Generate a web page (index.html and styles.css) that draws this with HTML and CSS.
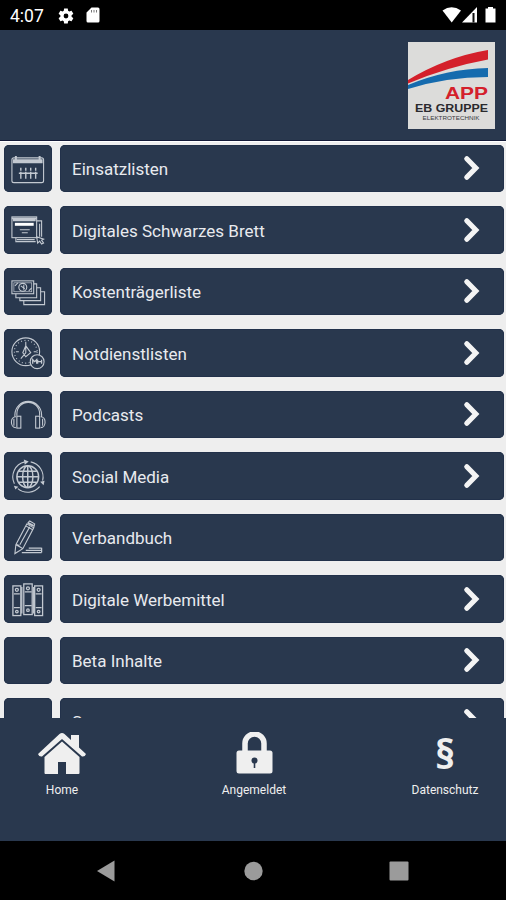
FILE: index.html
```
<!DOCTYPE html>
<html lang="de">
<head>
<meta charset="utf-8">
<title>EB Gruppe App</title>
<link rel="stylesheet" href="styles.css">
</head>
<body>
<svg class="defs" width="0" height="0"><defs>
<symbol id="chev" viewBox="0 0 18 26"><path d="M3.800 3.800L12.800 13L3.800 22.200" fill="none" stroke="#f4f4f4" stroke-width="5.200" stroke-linecap="round"/></symbol>
</defs></svg>
<div class="phone">
  <header class="status">
    <span class="time">4:07</span>
    <svg class="gear" width="18" height="18" viewBox="0 0 24 24"><path fill="#fff" fill-rule="evenodd" d="M19.400 13l.1-1-.1-1 2.100-1.700c.2-.1.200-.4.100-.6l-2-3.500c-.1-.2-.4-.3-.6-.2l-2.500 1-1.700-1-.4-2.600c0-.3-.2-.4-.5-.4h-4c-.2 0-.4.200-.5.400L9 5l-1.600 1-2.500-1c-.2-.1-.5 0-.6.200l-2 3.500c-.1.200-.1.500.1.600L4.500 11v2l-2.100 1.700c-.2.1-.2.400-.1.600l2 3.500c.1.200.4.300.6.200l2.500-1L9 19l.4 2.600c.1.200.3.400.5.400h4c.3 0 .5-.2.500-.4l.4-2.600 1.700-1 2.500 1c.2.100.5 0 .6-.2l2-3.500c.1-.2.100-.5-.1-.6zM12 15.200a3.200 3.200 0 1 1 0-6.400 3.200 3.200 0 0 1 0 6.400z"/></svg>
    <svg class="sd" width="14" height="16" viewBox="0 0 14 16"><path fill="#fff" d="M5.500.5H12a1.500 1.500 0 0 1 1.500 1.500v12a1.500 1.500 0 0 1-1.500 1.500H2A1.500 1.500 0 0 1 .5 14V5.500z"/><path d="M5.500 3v2.500M8 3v2.500M10.500 3v2.500" stroke="#777" stroke-width="1"/></svg>
    <svg class="signals" width="58" height="18" viewBox="0 0 58 18"><g fill="#fff"><path d="M.5 4.500Q9.500-2 19 4.500L9.700 16.500z"/><path d="M35 1v15.500H20z"/><path d="M46 2.500V1h5v1.500h2.500v14h-10v-14z"/></g><path d="M31.500 7v9.500" stroke="#111" stroke-width="2"/></svg>
  </header>
  <div class="brand">
    <svg class="logo" width="87" height="87" viewBox="0 0 87 87"><path fill="#dcdcda" d="M0 0h87v87H0z"/><path fill="#d4202b" d="M0 38Q38 15 80 8V17.500Q39 25 0 41.500z"/><path fill="#156bae" d="M0 43Q38 27 80 26V35Q38 35 0 47z"/><text class="logo-app" x="37" y="56.800" textLength="43" lengthAdjust="spacingAndGlyphs">APP</text><text class="logo-name" x="7" y="70.200" textLength="73" lengthAdjust="spacingAndGlyphs">EB GRUPPE</text><text class="logo-sub" x="14.500" y="77.500" textLength="57" lengthAdjust="spacingAndGlyphs">ELEKTROTECHNIK</text></svg>
  </div>
  <main class="list">
    <div class="row"><span class="tile"><svg viewBox="0 0 48 48"><rect x="8" y="13" width="32" height="25" rx="2"/><path d="M9 15.500h30M9 17.500h30" stroke-width="2"/><path d="M12 11v5M36 11v5" stroke-width="2"/><path d="M15 28.500h19M17 23v3M22 23v3M27 23v3M32 23v3M17 27v7M22 27v7M27 27v7M32 27v7" stroke-width="1.400"/></svg></span><span class="bar">Einsatzlisten<svg class="chev"><use href="#chev"/></svg></span></div>
    <div class="row"><span class="tile"><svg viewBox="0 0 48 48"><rect x="8" y="11" width="25" height="21"/><path d="M8 12.500h25M9 14.500h23" stroke-width="2"/><path d="M11 18.500h19" stroke="#fff" stroke-width="3"/><path d="M16 24h10M18 27h6M12 32v4h20M33 15h5v16M36 18v13M13 34h18"/><path d="M33 31l7 2.500-2 1 2 3-2 1-2-3-2 2z"/></svg></span><span class="bar">Digitales Schwarzes Brett<svg class="chev"><use href="#chev"/></svg></span></div>
    <div class="row"><span class="tile"><svg viewBox="0 0 48 48"><rect x="8" y="13" width="22" height="13"/><rect x="10" y="15" width="18" height="9" stroke-width=".7"/><circle cx="19" cy="19.500" r="4"/><path d="M11 18l3-3M25 23l3-3M17 18l4 3M20 17v5M30 16h3v14H12v-4M33 20h4v13H16v-3M37 24h4v13H20v-4"/></svg></span><span class="bar">Kostenträgerliste<svg class="chev"><use href="#chev"/></svg></span></div>
    <div class="row"><span class="tile"><svg viewBox="0 0 48 48"><circle cx="22" cy="23" r="14"/><circle cx="22" cy="23" r="11.500" stroke-dasharray="1 2.500"/><path d="M22 13v4M12 23h3M30 23h3M22 17l-3 7 3 4 5-4-5-7v7l-5 6"/><circle cx="33.500" cy="33" r="7" class="solid"/><path d="M29 35v-4l2 2 2-2v4M34 31v4M34 33h4M38 31v4" stroke-width="1.300"/></svg></span><span class="bar">Notdienstlisten<svg class="chev"><use href="#chev"/></svg></span></div>
    <div class="row"><span class="tile"><svg viewBox="0 0 48 48"><path d="M11 26v-2a13.500 13.500 0 0 1 27 0v2M13 25v-2a11.500 11.500 0 0 1 23 0v2M12 26c-6 0-6 11 0 11M37 26c6 0 6 11 0 11M10 28v7M39 28v7"/><rect x="13" y="25.500" width="4" height="12"/><rect x="32" y="25.500" width="4" height="12"/></svg></span><span class="bar">Podcasts<svg class="chev"><use href="#chev"/></svg></span></div>
    <div class="row"><span class="tile"><svg viewBox="0 0 48 48"><g stroke-width="1.500"><circle cx="24" cy="25" r="11"/><ellipse cx="24" cy="25" rx="5.200" ry="11"/><path d="M24 14v22M13 25h22M15 19.500h18M15 30.500h18"/></g><path d="M10.500 32A15.500 15.500 0 0 1 21 10M27 10A15.500 15.500 0 0 1 39 29M36 35A15.500 15.500 0 0 1 14 37"/><g fill="#c3c9d1" stroke="none"><path d="M20 7.500l5 2-4 3.500zM36.500 30l4.500-1-1 4.500zM10 34l4.500 1-3 3z"/></g></svg></span><span class="bar">Social Media<svg class="chev"><use href="#chev"/></svg></span></div>
    <div class="row"><span class="tile"><svg viewBox="0 0 48 48"><path d="M11 40l1-9 11-21 7 4-11 21zM12 31l7 4M22 12l7 4M16 31l10-18M12 31l2 0 2 2 3 2M24 9l2-2 5 3-1 4"/><path d="M24 9l6 3" stroke-width="2"/><path d="M18 39h20M25 34.500h13M22 36.800h16M38 34v5" stroke-width="1.300"/></svg></span><span class="bar">Verbandbuch</span></div>
    <div class="row"><span class="tile"><svg viewBox="0 0 48 48"><g stroke-width="1.300"><rect x="9" y="11" width="8" height="30"/><rect x="20" y="9" width="8.500" height="31"/><rect x="31" y="11" width="8" height="30"/><path d="M10 19h6M10 33h6M21 17h7M21 31h7M32 19h6M32 33h6M18 12v27M30 12v27"/><circle cx="13" cy="15" r="1.500"/><circle cx="24.200" cy="13.500" r="1.500"/><circle cx="35" cy="15" r="1.500"/><circle cx="13" cy="37" r="1.300"/><circle cx="24.200" cy="35.500" r="1.300"/><circle cx="35" cy="37" r="1.300"/></g></svg></span><span class="bar">Digitale Werbemittel<svg class="chev"><use href="#chev"/></svg></span></div>
    <div class="row"><span class="tile"></span><span class="bar">Beta Inhalte<svg class="chev"><use href="#chev"/></svg></span></div>
    <div class="row"><span class="tile"></span><span class="bar last">S<svg class="chev"><use href="#chev"/></svg></span></div>
  </main>
  <nav class="tabs">
    <a class="tab"><svg width="50" height="44" viewBox="0 0 50 44"><g fill="#efefef"><path d="M1 22L22.500 2Q25 0 27.500 2L34 8V3h8v12.500L49 22q-1 3-4 2.500L25 7 5 24.500Q2 25 1 22z"/><path d="M25 9.500L42.500 25v16q0 1-1 1H29V30h-8v12H8.500q-1 0-1-1V25z"/></g></svg><span>Home</span></a>
    <a class="tab"><svg width="50" height="44" viewBox="0 0 50 44"><path d="M16 22V11.500a9.500 9.500 0 0 1 19 0V22" fill="none" stroke="#efefef" stroke-width="5.500"/><rect x="7.500" y="18.500" width="36" height="23" rx="2.500" fill="#efefef"/><circle cx="25.500" cy="28.500" r="3" fill="#29384e"/><path d="M25.500 29v7" stroke="#29384e" stroke-width="1.600"/></svg><span>Angemeldet</span></a>
    <a class="tab"><b class="para">§</b><span>Datenschutz</span></a>
  </nav>
  <footer class="sysnav">
    <svg width="20" height="22" viewBox="0 0 20 22"><path fill="#9b9b9b" d="M1 11L18.500.5v21z"/></svg>
    <svg width="20" height="22" viewBox="0 0 20 22"><circle cx="10.500" cy="11" r="9.200" fill="#9b9b9b"/></svg>
    <svg width="20" height="22" viewBox="0 0 20 22"><rect x=".5" y="1.500" width="19" height="19" rx="1" fill="#9b9b9b"/></svg>
  </footer>
</div>
</body>
</html>
```
FILE: styles.css
```
* { box-sizing: border-box; }
body { margin: 0; background: #000; font-family: Roboto, "Liberation Sans", sans-serif; }
.defs { display: block; height: 0; }
.phone { display: flex; flex-direction: column; width: 506px; height: 900px; overflow: hidden; }
.status { display: flex; align-items: center; height: 30px; padding: 0 6px 0 10px; background: #000; color: #fff; }
.time { width: 47px; font-size: 17.500px; line-height: 30px; padding-top: 2px; }
.gear { margin: 1px 11px 0 0; }
.signals { margin-left: auto; }
.brand { display: flex; justify-content: flex-end; height: 111px; padding: 12px 11px 0; background: #29384e; border-bottom: 1.500px solid #141a38; }
.logo-app { font: bold 17px "Liberation Sans", sans-serif; fill: #d4202b; }
.logo-name { font: bold 10.500px "Liberation Sans", sans-serif; fill: #2a2a2e; }
.logo-sub { font: 5px "Liberation Sans", sans-serif; fill: #3a3a3e; }
.list { display: flex; flex-direction: column; gap: 14px; height: 577px; padding: 2.700px 2.500px 0 4px; overflow: hidden; background: #eeeeee; border-top: 1px solid #fff; }
.row { display: flex; flex: none; gap: 8.500px; height: 47.500px; }
.tile, .bar { background: #29384e; border-radius: 5px; box-shadow: inset 0 0 0 1px #22314a; }
.tile { flex: none; width: 47.500px; }
.tile svg { display: block; width: 47.500px; height: 47.500px; fill: none; stroke: #c3c9d1; stroke-width: 1.100; }
.tile .solid { fill: #29384e; }
.bar { display: flex; flex: 1; align-items: center; justify-content: space-between; padding: 2px 23px 0 12px; color: #e8eaee; font-size: 17px; }
.chev { width: 18px; height: 26px; margin-top: -2px; }
.tabs { display: flex; flex: none; justify-content: space-between; height: 123px; padding: 14px 0 0; background: #29384e; color: #efefef; }
.tab { display: flex; flex-direction: column; align-items: center; width: 124px; font-size: 12px; }
.tab:nth-child(2), .tab:nth-child(3) { transform: translateX(1px); }
.tab span { margin-top: 7px; line-height: 14px; }
.para { height: 44px; font: bold 41px/42px "Open Sans", sans-serif; }
.last { padding-top: 0; }
.sysnav { display: flex; justify-content: space-between; align-items: center; height: 59px; padding: 1px 97px 0 96px; background: #000; }
```
